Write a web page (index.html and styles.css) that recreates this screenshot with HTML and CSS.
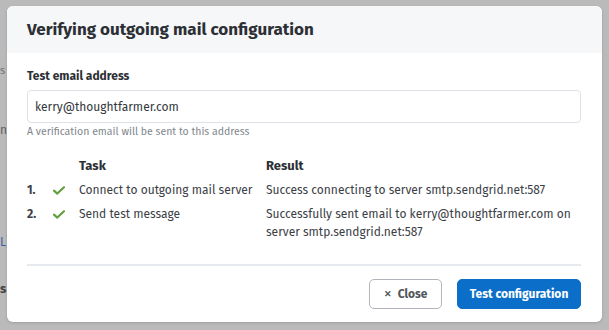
FILE: index.html
```html
<!DOCTYPE html>
<html>
<head>
<meta charset="utf-8">
<link rel="stylesheet" href="styles.css">
</head>
<body>
<div class="backdrop">
  <div class="bg-page">
    <span class="bg-text t1">s</span>
    <span class="bg-text t2">ns</span>
    <span class="bg-text t3">L)</span>
    <span class="bg-text t4">s</span>
  </div>
  <div class="dialog">
    <div class="dialog-header">
      <h1 class="dialog-title">Verifying outgoing mail configuration</h1>
    </div>
    <div class="dialog-body">
      <label class="field-label">Test email address</label>
      <div class="input">kerry@thoughtfarmer.com</div>
      <div class="help">A verification email will be sent to this address</div>
      <div class="tasks">
        <div></div><div></div><div class="th">Task</div><div class="th">Result</div>
        <div class="num">1.</div>
        <div class="check"><svg width="12" height="9" viewBox="0 0 12 9"><path d="M1 4.6 L4.3 7.6 L11 1.2" fill="none" stroke="#5f9f3c" stroke-width="2.1" stroke-linecap="round" stroke-linejoin="round"/></svg></div>
        <div class="cell">Connect to outgoing mail server</div>
        <div class="cell">Success connecting to server smtp.sendgrid.net:587</div>
        <div class="num">2.</div>
        <div class="check"><svg width="12" height="9" viewBox="0 0 12 9"><path d="M1 4.6 L4.3 7.6 L11 1.2" fill="none" stroke="#5f9f3c" stroke-width="2.1" stroke-linecap="round" stroke-linejoin="round"/></svg></div>
        <div class="cell">Send test message</div>
        <div class="cell">Successfully sent email to kerry@thoughtfarmer.com on server smtp.sendgrid.net:587</div>
      </div>
      <div class="divider"></div>
      <div class="actions">
        <button class="btn btn-secondary"><span class="x">✕</span>Close</button>
        <button class="btn btn-primary">Test configuration</button>
      </div>
    </div>
  </div>
</div>
</body>
</html>
```

FILE: styles.css
```css
html, body {
  margin: 0;
  padding: 0;
}
body {
  width: 609px;
  height: 330px;
  overflow: hidden;
  background: #bababa;
  font-family: "Fira Sans", "Roboto", "Noto Sans", sans-serif;
  color: #3b4046;
}
.backdrop {
  position: relative;
  width: 609px;
  height: 330px;
}
.bg-page {
  position: absolute;
  left: 0;
  top: 0;
  width: 609px;
  height: 330px;
}
.bg-text {
  position: absolute;
  left: 0;
  font-size: 13px;
  color: #4a4a4a;
}
.t1 { top: 64px; font-size: 11px; color: #707070; }
.t2 { top: 123px; font-size: 12px; color: #606060; }
.t3 { top: 235px; font-size: 12px; color: #3a5fa0; }
.t4 { top: 281px; font-size: 13px; font-weight: bold; color: #444; }
.dialog {
  position: absolute;
  left: 7px;
  top: 6px;
  width: 595px;
  height: 316px;
  background: #fff;
  border-radius: 6px;
  overflow: hidden;
  box-shadow: 0 1px 3px rgba(0,0,0,0.15);
}
.dialog-header {
  height: 47px;
  background: #f6f7f9;
  display: flex;
  align-items: center;
  padding: 0 20px;
}
.dialog-title {
  margin: 0;
  font-size: 17px;
  font-weight: 700;
  color: #2c3035;
}
.dialog-body {
  padding: 15px 21px 0 20px;
  display: flex;
  flex-direction: column;
}
.field-label {
  font-size: 12px;
  font-weight: 700;
  color: #2c3035;
  line-height: 16px;
}
.input {
  margin-top: 6px;
  height: 31px;
  border: 1px solid #dde2e8;
  border-radius: 4px;
  display: flex;
  align-items: center;
  padding: 0 7px;
  font-size: 12px;
  color: #33383d;
}
.help {
  margin-top: 2px;
  font-size: 10.5px;
  color: #80868d;
  line-height: 14px;
}
.tasks {
  margin-top: 18px;
  display: grid;
  grid-template-columns: 25px 27px 187px 1fr;
  row-gap: 6px;
  font-size: 12px;
  line-height: 18px;
  align-items: start;
}
.th {
  font-weight: 700;
  font-size: 13px;
  color: #2c3035;
}
.num {
  font-weight: 700;
  color: #3b4046;
}
.check {
  display: flex;
  align-items: center;
  height: 18px;
  padding-left: 1px;
}
.cell {
  color: #3b4046;
}
.divider {
  margin-top: 23px;
  height: 2px;
  background: #e6e9ed;
}
.actions {
  margin-top: 13px;
  display: flex;
  justify-content: flex-end;
  gap: 15px;
}
.btn {
  height: 30px;
  border-radius: 5px;
  font-family: inherit;
  font-size: 12px;
  font-weight: 700;
  padding: 0;
  display: flex;
  align-items: center;
  white-space: nowrap;
}
.btn-secondary {
  width: 73px;
  background: #fff;
  border: 1px solid #b1b6bc;
  color: #50565c;
  justify-content: center;
}
.x {
  font-size: 9px;
  margin-right: 6px;
}
.btn-primary {
  width: 124px;
  background: #0b6fca;
  border: 1px solid #0b6fca;
  color: #fff;
  justify-content: center;
}
```
